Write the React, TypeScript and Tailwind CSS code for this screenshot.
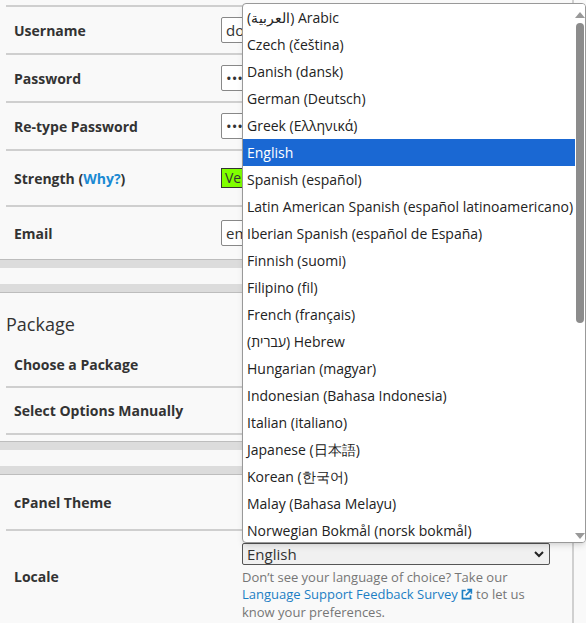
import React from "react";

const langs = [
  "(العربية) Arabic","Czech (čeština)","Danish (dansk)","German (Deutsch)","Greek (Ελληνικά)","English","Spanish (español)","Latin American Spanish (español latinoamericano)","Iberian Spanish (español de España)","Finnish (suomi)","Filipino (fil)","French (français)","(עברית) Hebrew","Hungarian (magyar)","Indonesian (Bahasa Indonesia)","Italian (italiano)","Japanese (日本語)","Korean (한국어)","Malay (Bahasa Melayu)","Norwegian Bokmål (norsk bokmål)",
];

function Row({ label, h, children, last }: { label: React.ReactNode; h: number; children?: React.ReactNode; last?: boolean }) {
  return (
    <div className={`flex items-center ml-[6px] ${last ? "" : "border-b-[2px] border-[#cfcfcf]"}`} style={{ height: h }}>
      <div className="w-[215px] pl-[8px] font-bold text-[14px] text-[#333]">{label}</div>
      <div className="flex-1">{children}</div>
    </div>
  );
}

const Band = () => (
  <div className="flex flex-col">
    <div className="h-[1px] bg-[#bdbdbd]" />
    <div className="h-[8px] bg-[#dcdcdc]" />
    <div className="h-[16px] bg-[#f9f9f9]" />
    <div className="h-[8px] bg-[#dcdcdc]" />
    <div className="h-[1px] bg-[#bdbdbd]" />
  </div>
);

const Inp = ({ t }: { t: string }) => (
  <div className="w-[60px] h-[26px] border border-[#888] rounded-[2px] bg-white px-[4px] text-[15px] leading-[24px] text-[#333]">{t}</div>
);

export default function App() {
  return (
    <div className="relative w-[586px] h-[623px] overflow-hidden bg-[#f9f9f9] text-[#333]" style={{ fontFamily: '"Open Sans", sans-serif' }}>
      <div className="mr-[12px] border-r-[2px] border-[#d0d0d0] h-full">
        <div className="h-[7px] ml-[6px] border-b-[2px] border-[#cfcfcf]" />
        <Row label="Username" h={48}><Inp t="do" /></Row>
        <Row label="Password" h={48}><Inp t="••••" /></Row>
        <Row label="Re-type Password" h={48}><Inp t="••••" /></Row>
        <Row label={<>Strength (<span className="text-[#1b8ad3]">Why?</span>)</>} h={56}>
          <div className="w-[40px] h-[20px] bg-[#80ff00] border border-[#333] text-[14px] leading-[18px] px-[3px]">Ve</div>
        </Row>
        <Row label="Email" h={52} last><Inp t="em" /></Row>
        <Band />
        <div className="ml-[6px] text-[18px] pt-[18px] pb-[4px] text-[#333]">Package</div>
        <Row label="Choose a Package" h={46} />
        <Row label="Select Options Manually" h={47} />
        <div className="h-[6px]" />
        <Band />
        <Row label="cPanel Theme" h={56} />
        <div className="flex ml-[6px] pt-[12px]">
          <div className="w-[236px] pl-[8px] pt-[23px] font-bold text-[14px]">Locale</div>
          <div className="flex flex-col">
            <div className="w-[308px] h-[22px] border border-[#555] rounded-[2px] bg-[#f0f0f0] flex items-center justify-between px-[4px] text-[15px]">
              <span>English</span>
              <svg width="12" height="8" viewBox="0 0 12 8"><path d="M2 2l4 4 4-4" fill="none" stroke="#222" strokeWidth="2" /></svg>
            </div>
            <div className="text-[13px] leading-[17px] text-[#767676] mt-[4px] w-[300px]">
              Don’t see your language of choice? Take our <span className="text-[#1b7ec4]">Language Support Feedback Survey
              <svg className="inline ml-[2px] mb-[3px]" width="13" height="13" viewBox="0 0 16 16"><path d="M7 3H3v10h10V9" fill="none" stroke="#1b7ec4" strokeWidth="2"/><path d="M9 2h5v5M14 2L7 9" fill="none" stroke="#1b7ec4" strokeWidth="2"/></svg></span> to let us know your preferences.
            </div>
          </div>
        </div>
      </div>
      <div className="absolute left-[242px] top-[3px] w-[344px] h-[540px] bg-white border border-[#999] rounded-[4px] shadow-md overflow-hidden flex">
        <div className="flex-1">
          {langs.map((l) => (
            <div key={l} className={`h-[27px] pl-[4px] text-[14px] leading-[27px] whitespace-nowrap ${l === "English" ? "bg-[#1a68d3] text-white" : "text-[#222]"}`}>{l}</div>
          ))}
        </div>
        <div className="w-[10px] flex flex-col items-center bg-white">
          <div className="w-0 h-0 border-l-[5px] border-r-[5px] border-b-[6px] border-l-transparent border-r-transparent border-b-[#999] mt-[8px]" />
          <div className="w-[8px] h-[300px] bg-[#8c8c8c] rounded-[4px] mt-[5px]" />
          <div className="flex-1" />
          <div className="w-0 h-0 border-l-[5px] border-r-[5px] border-t-[6px] border-l-transparent border-r-transparent border-t-[#999] mb-[3px]" />
        </div>
      </div>
    </div>
  );
}
